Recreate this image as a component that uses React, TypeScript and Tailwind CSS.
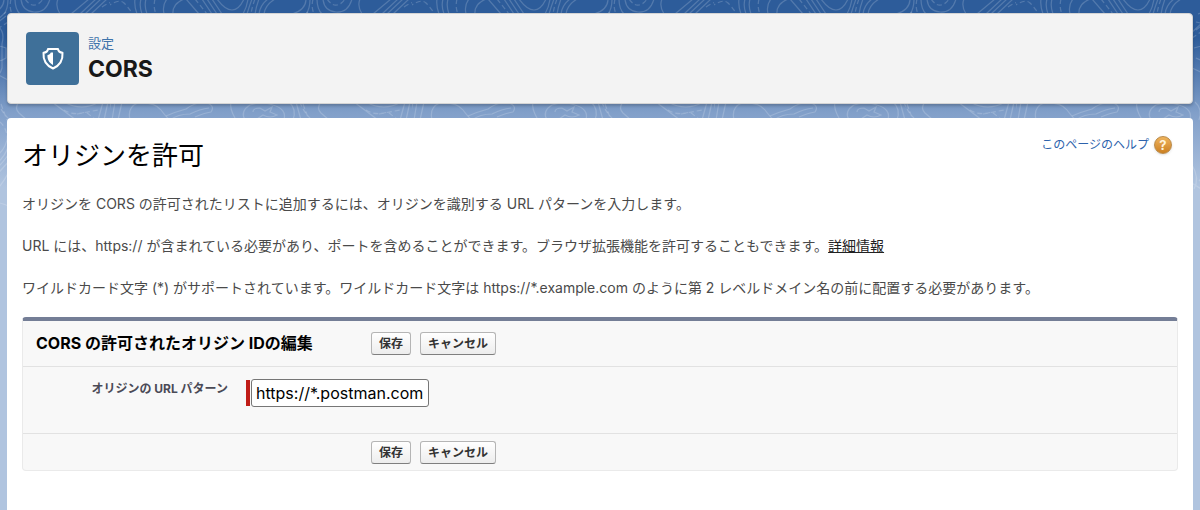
import { useId, useState } from "react";
import type { FormEvent, ReactNode } from "react";

const DEFAULT_PATTERN = "https://*.postman.com";

// Topographic line texture, repeated across the top of the page
function TopoBackground() {
  const id = useId();

  return (
    <svg className="absolute inset-0 h-full w-full" aria-hidden="true">
      <defs>
        <pattern id={id} x="110" y="0" width="302" height="250" patternUnits="userSpaceOnUse">
          <g fill="none" stroke="#ffffff" strokeOpacity="0.18" strokeWidth="1.200">
            {/* Upper contours */}
            <path strokeDasharray="5 3" d="M-3 7Q9-2 14 3T22 13M294 7Q300 3 306 1" />
            <path d="M25 -1Q24 6 27 14M31 -1Q29 6 32 14M36 -1Q34 6 37 14" />
            <path strokeDasharray="5 3" d="M45 -1Q43 7 46 14M85 -1L97 14M145 -1Q142 7 141 14M203 -1Q201 7 204 14" />
            <path d="M54 14Q52 5 57 -1M63 14Q62 4 74 -1M76 -1L89 14M92 -1L102 14M97 -1L107 14M102 -1L112 14" />
            <path d="M107 -1Q115 10 122 10T134 -1M138 -1Q137 7 133 14M142 -1Q139 7 137 14M149 -1Q146 7 145 14M158 -1Q150 5 149 14" />
            <path d="M165 -1Q155 5 154 14M196 -1Q196 10 182 14M200 -1Q200 9 196 14M207 -1Q207 9 212 14" />
            <path d="M213 -1Q214 11 226 12T242 -1M250 -1Q247 6 252 14M263 14Q275 4 281 -1M272 14L288 -1M277 14L293 -1M283 14L299 -1" />
            <path strokeDasharray="5 3" d="M217 -1Q222 6 227 5T235 -1" />
            {/* Edge contours */}
            <path d="M185 24Q198 28 194 44V68Q192 76 185 78M180 22Q190 24 191 27M180 30L198 16" />
            <path strokeDasharray="5 3" d="M176 38L200 22M188 94Q190 108 200 118M192 122Q199 128 200 142" />
            <path d="M174 34L198 12M178 48Q189 44 198 48V58Q190 64 180 58M176 68Q185 72 200 80" />
            {/* Lower contours */}
            <path d="M1 102L-3 120M5 102L2 120M12 102L8 120M20 120Q17 107 28 103Q45 102 51 110T60 120" />
            <path d="M56 116Q65 112 76 109Q84 103 94 102Q106 105 101 112Q94 113 85 117M60 120Q68 114 80 114Q90 109 99 108" />
            <path d="M121 102Q119 108 126 120M135 120Q130 111 140 105Q152 101 163 105Q177 109 174 120" />
            <path d="M143 112Q143 108 150 108L155 111L162 107L160 112L167 115Q160 119 153 115L147 119M179 102Q187 109 183 120M186 102L191 120" />
            <path strokeDasharray="5 3" d="M193 104L199 120M256 110Q265 116 278 112L288 120M269 114L290 110" />
            <path d="M211 102Q206 108 211 113L219 120M244 102L268 120M256 102Q274 112 291 102M290 120L295 102M296 120L300 102" />
            {/* Side contours below the header */}
            <path d="M190 155Q199 147 200 134M188 164Q198 156 201 144M185 172Q196 162 202 152M183 181Q194 169 202 160M188 191Q198 179 202 169" />
            <path d="M187 202Q198 204 204 208M176 165Q184 178 178 189M171 180L190 192" />
          </g>
        </pattern>
      </defs>
      <rect width="100%" height="100%" fill={`url(#${id})`} />
    </svg>
  );
}

function ShieldIcon() {
  return (
    <svg width="24" height="24" viewBox="0 0 24 24" aria-hidden="true">
      <path
        d="M7 2h10c.3 2.200 1.800 3.500 4.500 3.700.6 8-3 12.800-9.500 15.800C5.500 18.500 1.900 13.700 2.500 5.700 5.200 5.500 6.700 4.200 7 2Z"
        fill="none"
        stroke="#ffffff"
        strokeWidth="2"
        strokeLinejoin="round"
      />
      <path d="M12 5.500v12.500C7.800 15.500 6.400 12.500 6.400 8.200 8.200 7.800 9.200 7 9.800 5.500Z" fill="#ffffff" />
    </svg>
  );
}

function HelpIcon() {
  return (
    <span className="flex size-[18px] items-center justify-center rounded-full border border-[#b98a4a] bg-linear-to-b from-[#efb45c] to-[#cc801f] text-[13px] leading-none font-bold text-[#fff3dc] shadow-sm">
      ?
    </span>
  );
}

interface FormButtonProps {
  type?: "button" | "submit";
  onClick?: () => void;
  children: ReactNode;
}

function FormButton({ type = "button", onClick, children }: FormButtonProps) {
  return (
    <button
      type={type}
      onClick={onClick}
      className="h-[23px] cursor-pointer rounded-[3px] border border-[#b5b5b5] border-b-[#7f7f7f] bg-linear-to-b from-white to-[#ededed] px-[7px] text-xs leading-none font-bold text-[#333333]"
    >
      {children}
    </button>
  );
}

function FormActions({ onCancel }: { onCancel: () => void }) {
  return (
    <div className="flex gap-[9px]">
      <FormButton type="submit">保存</FormButton>
      <FormButton onClick={onCancel}>キャンセル</FormButton>
    </div>
  );
}

export default function App() {
  const [pattern, setPattern] = useState(DEFAULT_PATTERN);

  const handleSubmit = (e: FormEvent) => {
    e.preventDefault();
  };

  const handleCancel = () => setPattern(DEFAULT_PATTERN);

  return (
    <div className="relative flex min-h-screen flex-col gap-[14px] bg-[#b0c4df] px-[7px] pt-[13px] font-['Inter','Noto_Sans_CJK_JP',sans-serif]">
      <div className="absolute inset-x-0 top-0 h-[250px] bg-linear-to-b from-[#2d5c9a] from-15% via-[#819fc9] via-45% to-[#b0c4df] to-75%">
        <TopoBackground />
      </div>

      {/* Page header */}
      <header className="relative flex items-center gap-[9px] rounded border border-[#d4d4d4] bg-[#f3f3f3] px-[18px] py-[18px] shadow-[0_2px_3px_rgba(0,0,0,0.2)]">
        <div className="flex size-[53px] items-center justify-center rounded bg-[#3f7099]">
          <ShieldIcon />
        </div>
        <div>
          <p className="text-[13px] leading-[20px] text-[#3f74ab]">設定</p>
          <h1 className="text-[23px] leading-[32px] font-bold text-[#181818]">CORS</h1>
        </div>
      </header>

      {/* Page body */}
      <main className="relative flex-1 rounded-t bg-white px-[15px] pt-[17px] pb-10">
        <div className="flex items-start justify-between pr-[6px]">
          <h2 className="text-[26px] leading-[42px] text-black">オリジンを許可</h2>
          <a href="#help" className="flex items-center gap-[5px] text-xs leading-[20px] text-[#2d63ac]">
            このページのヘルプ
            <HelpIcon />
          </a>
        </div>

        <div className="mt-4 flex flex-col gap-[21px] text-sm leading-[21px] text-[#4a4a4a]">
          <p>オリジンを CORS の許可されたリストに追加するには、オリジンを識別する URL パターンを入力します。</p>
          <p>
            URL には、https:// が含まれている必要があり、ポートを含めることができます。ブラウザ拡張機能を許可することもできます。
            <a href="#details" className="text-[#222222] underline">
              詳細情報
            </a>
          </p>
          <p>
            ワイルドカード文字 (*) がサポートされています。ワイルドカード文字は https://*.example.com のように第 2 レベルドメイン名の前に配置する必要があります。
          </p>
        </div>

        <form
          onSubmit={handleSubmit}
          className="mt-[19px] rounded border border-t-4 border-[#eaeaea] border-t-[#747e96] bg-[#f8f8f8]"
        >
          <div className="flex items-center border-b border-[#e2e2e2] py-[11px]">
            <h3 className="w-[348px] pl-[13px] text-base leading-[23px] font-bold text-black">
              CORS の許可されたオリジン IDの編集
            </h3>
            <FormActions onCancel={handleCancel} />
          </div>

          <div className="flex items-start border-b border-[#e2e2e2] pt-3 pb-[26px]">
            <label htmlFor="url-pattern" className="w-[205px] text-right text-xs leading-[20px] font-bold text-[#4a4a56]">
              オリジンの URL パターン
            </label>
            <div className="ml-[18px] flex items-center gap-px">
              <span className="h-[26px] w-[4px] bg-[#c01d17]" />
              <input
                id="url-pattern"
                type="text"
                required
                value={pattern}
                onChange={(e) => setPattern(e.target.value)}
                className="h-[28px] w-[178px] rounded-[3px] border border-[#767676] bg-white px-1 text-base text-black"
              />
            </div>
          </div>

          <div className="flex pt-[7px] pb-[6px] pl-[348px]">
            <FormActions onCancel={handleCancel} />
          </div>
        </form>
      </main>
    </div>
  );
}
